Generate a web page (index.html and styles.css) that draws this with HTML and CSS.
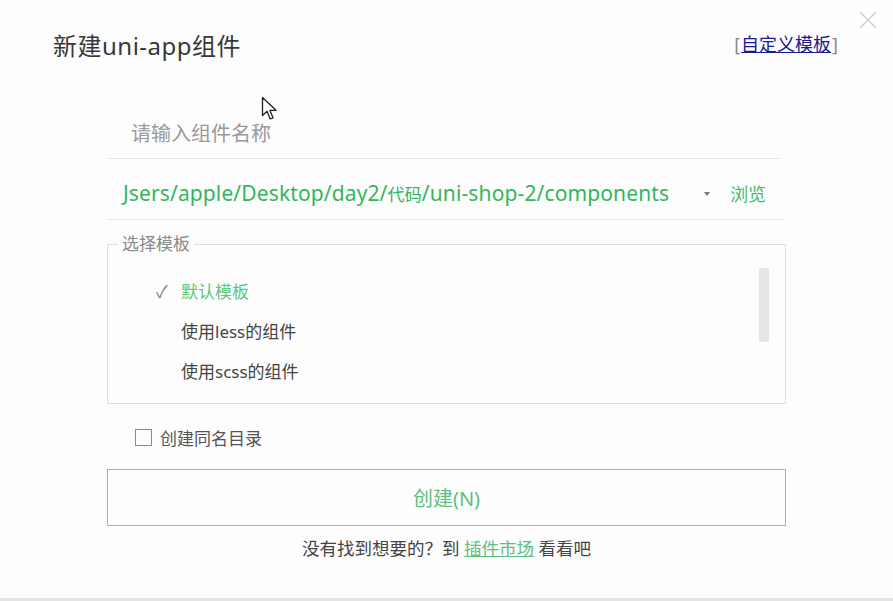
FILE: index.html
```html
<!DOCTYPE html>
<html lang="zh-CN">
<head>
<meta charset="utf-8">
<title>新建uni-app组件</title>
<link rel="stylesheet" href="styles.css">
</head>
<body>
<div class="window">
  <button class="close" aria-label="关闭">
    <svg width="18" height="18" viewBox="0 0 18 18"><path d="M1 1 L17 17 M17 1 L1 17" stroke="#cfcfcf" stroke-width="1.3" fill="none"/></svg>
  </button>
  <header class="header">
    <h1 class="title">新建uni-app组件</h1>
    <span class="custom"><span class="bracket">[</span><a href="#" class="custom-link">自定义模板</a><span class="bracket">]</span></span>
  </header>
  <main class="form">
    <div class="name-row">
      <span class="placeholder">请输入组件名称</span>
    </div>
    <div class="path-row">
      <span class="path">Jsers/apple/Desktop/day2/<span class="cjk">代码</span>/uni-shop-2/components</span>
      <span class="caret"></span>
      <span class="browse">浏览</span>
    </div>
    <fieldset class="templates">
      <legend class="legend">选择模板</legend>
      <div class="templates-body">
        <ul class="list">
          <li class="item selected"><span class="check">✓</span>默认模板</li>
          <li class="item"><span class="check"></span>使用less的组件</li>
          <li class="item"><span class="check"></span>使用scss的组件</li>
        </ul>
        <div class="scrollbar"><div class="thumb"></div></div>
      </div>
    </fieldset>
    <label class="checkbox-row"><span class="box"></span>创建同名目录</label>
    <button class="create">创建(N)</button>
    <p class="hint">没有找到想要的？到 <a href="#" class="market">插件市场</a> 看看吧</p>
  </main>
  <svg class="cursor" width="18" height="26" viewBox="0 0 18 26"><path d="M1.5 1.5 L1.5 19.5 L6 15.3 L9.2 23 L12 21.8 L8.9 14.3 L15 14.3 Z" fill="#fff" stroke="#222" stroke-width="1.3" stroke-linejoin="round"/></svg>
</div>
</body>
</html>
```
FILE: styles.css
```css
* { box-sizing: border-box; }
html, body { margin: 0; padding: 0; }
body {
  background: #fdfdfd;
  font-family: "Noto Sans", "Noto Sans CJK SC", sans-serif;
  color: #444;
}
.window {
  position: relative;
  width: 893px;
  height: 601px;
  border-bottom: 3px solid #e3e3e3;
  overflow: hidden;
}
.close {
  position: absolute;
  left: 859px;
  top: 11px;
  width: 18px;
  height: 18px;
  padding: 0;
  border: 0;
  background: none;
}
.close svg { display: block; }
.cursor {
  position: absolute;
  left: 261px;
  top: 96px;
}
.header {
  display: flex;
  justify-content: space-between;
  align-items: center;
  padding: 29px 55px 0 53px;
  height: 62px;
}
.title {
  margin: 0;
  font-weight: normal;
  font-size: 24px;
  line-height: 34px;
  color: #383838;
  letter-spacing: 0.5px;
}
.custom {
  font-size: 18px;
  line-height: 26px;
  margin-top: -4px;
}
.bracket { color: #888; }
.custom-link {
  color: #1a1a8f;
  text-decoration: underline;
  padding: 0 1px;
}
.form {
  margin-left: 107px;
  width: 679px;
}
.name-row {
  margin-top: 48px;
  width: 673px;
  height: 49px;
  line-height: 48px;
  padding-left: 24px;
  border-bottom: 1px solid #e8e8e8;
}
.placeholder {
  font-size: 20px;
  color: #9a9a9a;
}
.path-row {
  display: flex;
  align-items: center;
  height: 61px;
  padding: 10px 0 0 16px;
  width: 678px;
  border-bottom: 1px solid #e8e8e8;
}
.path {
  font-size: 21px;
  color: #33b55c;
  white-space: nowrap;
  line-height: 50px;
  letter-spacing: 0.12px;
}
.path .cjk { font-size: 17px; }
.caret {
  margin-left: 35px;
  width: 0;
  height: 0;
  border-left: 3px solid transparent;
  border-right: 3px solid transparent;
  border-top: 4px solid #777;
}
.browse {
  margin-left: 20px;
  font-size: 18px;
  color: #4cbb6b;
  line-height: 50px;
}
.templates {
  margin: 14px 0 0 0;
  padding: 0;
  height: 170px;
  border: 1px solid #dedede;
}
.legend {
  margin-left: 10px;
  padding: 0 4px;
  font-size: 17px;
  line-height: 20px;
  color: #8a8a8a;
}
.templates-body {
  display: flex;
}
.list {
  flex: 1;
  list-style: none;
  margin: 16px 0 0 0;
  padding: 0 0 0 48px;
}
.item {
  display: flex;
  align-items: center;
  height: 40px;
  font-size: 17px;
  color: #444;
}
.item.selected { color: #5bc77f; }
.check {
  width: 25px;
  font-size: 17px;
  color: #5f8a6e;
}
.scrollbar {
  width: 10px;
  margin: 14px 16px 0 0;
}
.thumb {
  height: 74px;
  background: #e6e6e6;
}
.checkbox-row {
  display: flex;
  align-items: center;
  margin-top: 13px;
  height: 40px;
  padding-left: 28px;
  font-size: 17px;
  color: #555;
}
.box {
  width: 17px;
  height: 17px;
  border: 1px solid #8a8a8a;
  margin-right: 8px;
}
.create {
  display: block;
  width: 679px;
  height: 57px;
  margin-top: 12px;
  border: 1px solid #7fcc9a;
  background: #fefefe;
  font-family: inherit;
  font-size: 20px;
  color: #5cc07f;
}
.hint {
  margin: 11px 0 0 0;
  text-align: center;
  font-size: 17.5px;
  line-height: 22px;
  color: #444;
}
.market {
  color: #5cc07f;
  text-decoration: underline;
}
```
